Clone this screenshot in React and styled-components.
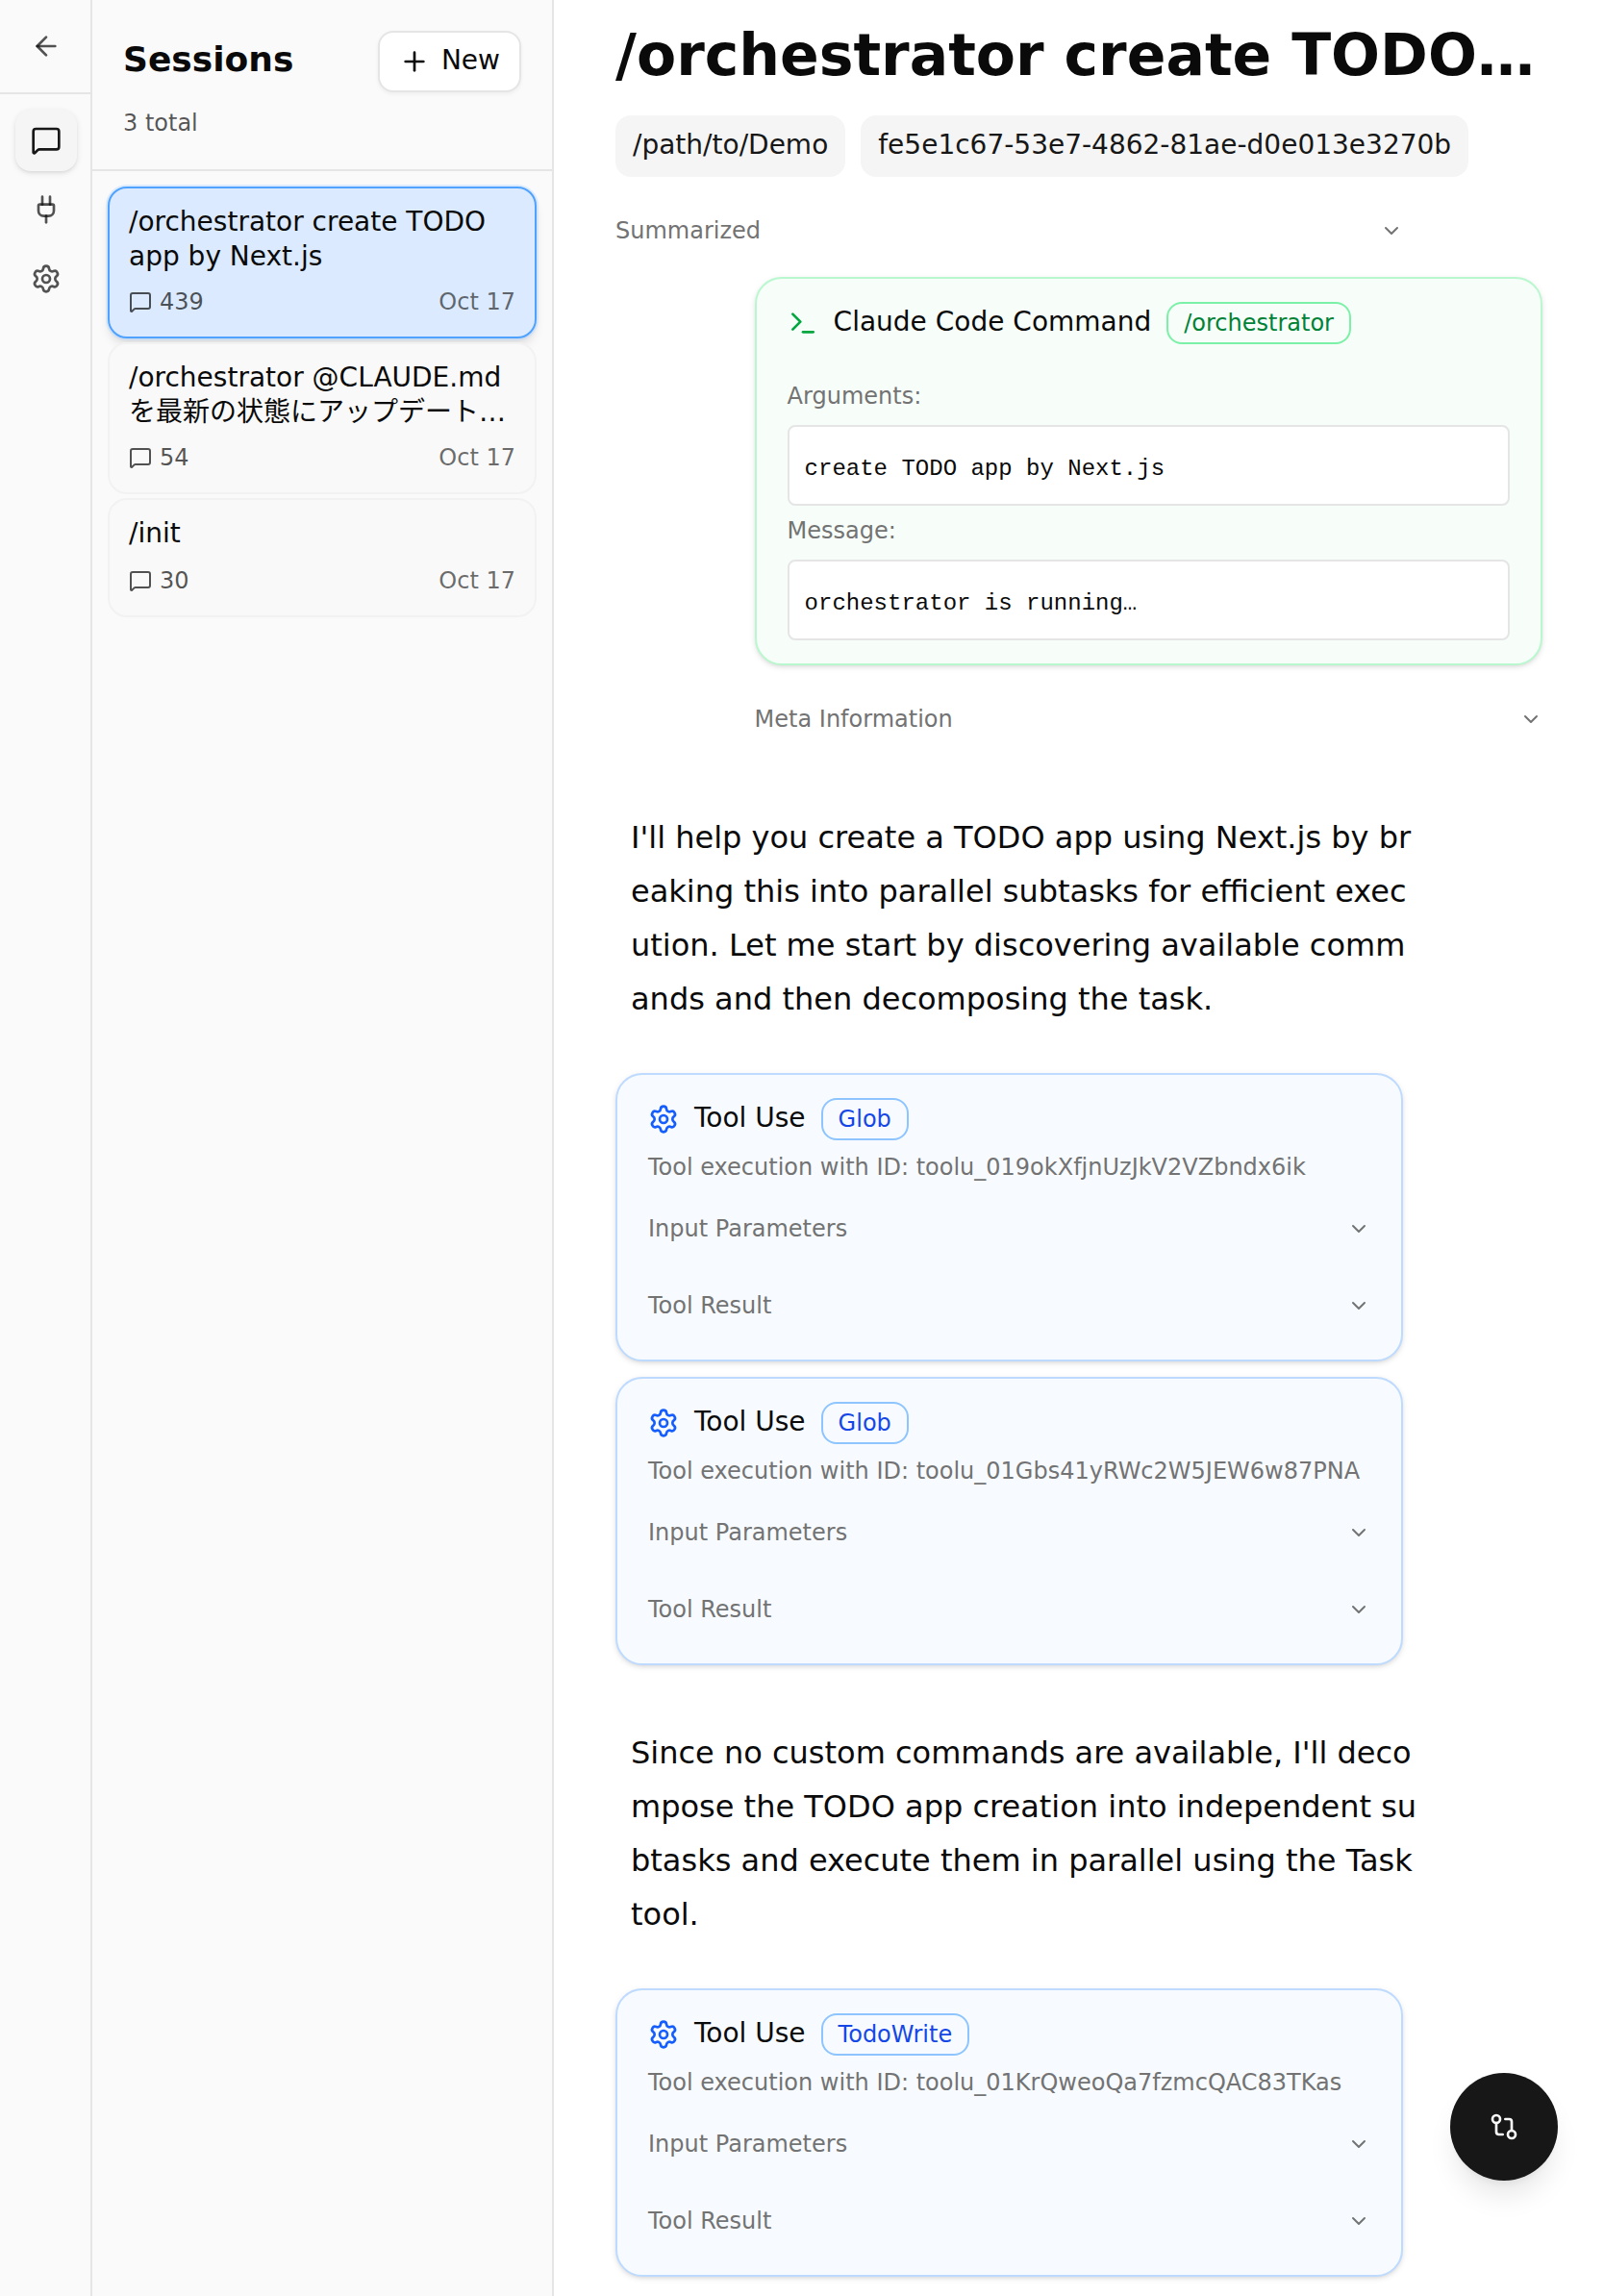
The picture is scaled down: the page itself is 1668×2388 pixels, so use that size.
import React from "react";
import styled, { createGlobalStyle, css } from "styled-components";
import { ArrowLeft, ChevronDown, GitCompare, MessageSquare, Plug, Plus, Settings, Terminal } from "lucide-react";

const GlobalStyle = createGlobalStyle`
  *, *::before, *::after { box-sizing: border-box; }
  body {
    margin: 0;
    background: #fff;
    color: #0a0a0a;
    font-family: "DejaVu Sans", "Noto Sans CJK JP", sans-serif;
    font-size: 28px;
    line-height: 40px;
    overflow: hidden;
  }
  svg { display: block; flex-shrink: 0; }
  button { font: inherit; color: inherit; cursor: pointer; }
`;

const Layout = styled.div`
  display: flex;
  width: 1668px;
  height: 2388px;
  overflow: hidden;
`;

const Rail = styled.nav`
  flex: 0 0 96px;
  background: #fafafa;
  border-right: 2px solid #e5e5e5;
`;

const RailTop = styled.div`
  height: 98px;
  padding: 16px 0 16px 16px;
  border-bottom: 2px solid #e5e5e5;
`;

const RailMenu = styled.div`
  display: flex;
  flex-direction: column;
  gap: 8px;
  padding: 16px 0 16px 16px;
`;

const RailButton = styled.button`
  display: flex;
  align-items: center;
  justify-content: center;
  width: 64px;
  height: 64px;
  padding: 0;
  border: 0;
  border-radius: 16px;
  background: transparent;
  color: rgba(10, 10, 10, 0.7);
  ${(p) =>
    p.$active &&
    css`
      background: #f5f5f5;
      color: #171717;
      box-shadow: 0 2px 6px rgba(0, 0, 0, 0.1), 0 2px 4px -2px rgba(0, 0, 0, 0.1);
    `}
`;

const Panel = styled.aside`
  flex: 0 0 480px;
  background: #fafafa;
  border-right: 2px solid #e5e5e5;
`;

const PanelHeader = styled.header`
  height: 178px;
  padding: 32px;
  border-bottom: 2px solid #e5e5e5;
`;

const PanelTitleRow = styled.div`
  display: flex;
  align-items: center;
  justify-content: space-between;
  margin-bottom: 16px;
  height: 64px;
`;

const PanelTitle = styled.h2`
  margin: 0;
  padding-bottom: 4px;
  font-size: 36px;
  line-height: 56px;
  font-weight: 700;
`;

const NewButton = styled.button`
  display: flex;
  align-items: center;
  gap: 12px;
  height: 64px;
  padding: 0 20px;
  border: 2px solid #e5e5e5;
  border-radius: 16px;
  background: #fff;
  box-shadow: 0 2px 4px rgba(0, 0, 0, 0.05);
`;

const Label = styled.span`
  padding-bottom: 2px;
`;

const Total = styled.p`
  margin: 0;
  font-size: 24px;
  line-height: 32px;
  color: rgba(10, 10, 10, 0.7);
`;

const SessionList = styled.div`
  display: flex;
  flex-direction: column;
  gap: 4px;
  padding: 16px;
`;

const SessionCard = styled.a`
  display: flex;
  flex-direction: column;
  gap: 12px;
  padding: 20px;
  border: 2px solid ${(p) => (p.$active ? "#50a2ff" : "#f2f2f2")};
  border-radius: 20px;
  background: ${(p) => (p.$active ? "#dbeafe" : "#f9f9f9")};
  box-shadow: ${(p) =>
    p.$active
      ? "0 0 0 2px rgba(190, 219, 255, 0.5), 0 8px 12px -2px rgba(0, 0, 0, 0.1), 0 4px 8px -4px rgba(0, 0, 0, 0.1)"
      : "none"};
`;

const SessionTitle = styled.div`
  height: ${(p) => (p.$wrapped ? 70 : 36)}px;
  margin: -3px 0 3px;
  line-height: 36px;
  white-space: pre-line;
`;

const SessionMeta = styled.div`
  display: flex;
  align-items: center;
  justify-content: space-between;
  font-size: 24px;
  line-height: 32px;
  color: rgba(10, 10, 10, 0.7);
`;

const MessageCount = styled.span`
  display: flex;
  align-items: center;
  gap: 8px;
`;

const SessionDate = styled.span`
  color: rgba(10, 10, 10, 0.6);
`;

const Main = styled.main`
  flex: 1;
  min-width: 0;
  padding: 20px 64px 0;
`;

const Title = styled.h1`
  margin: 0;
  height: 84px;
  font-size: 60px;
  line-height: 75px;
  font-weight: 700;
  white-space: nowrap;
`;

const Badges = styled.div`
  display: flex;
  gap: 16px;
  margin-top: 16px;
`;

const Badge = styled.span`
  display: flex;
  align-items: center;
  height: 64px;
  padding: 0 18px 2px;
  border-radius: 16px;
  background: #f5f5f5;
  color: #171717;
`;

const Conversation = styled.div`
  display: flex;
  flex-direction: column;
  margin-top: 24px;
`;

const Turn = styled.section`
  display: flex;
  flex-direction: column;
  width: 85%;
  align-self: ${(p) => (p.$user ? "flex-end" : "flex-start")};
  margin-top: ${(p) => p.$gap || 0}px;
`;

const Disclosure = styled.button`
  display: flex;
  align-items: center;
  justify-content: space-between;
  width: 100%;
  margin: ${(p) => p.$gap || 0}px 0 0;
  padding: 16px 0;
  border: 0;
  background: none;
  font-size: 24px;
  line-height: 32px;
  color: #737373;
`;

const tones = {
  green: { border: "#b9f8cf", bg: "#f7fef9", icon: "#00a63e", tagBorder: "#7bf1a8", tag: "#008236" },
  blue: { border: "#bedbff", bg: "#f7fbff", icon: "#155dfc", tagBorder: "#8ec5ff", tag: "#1447e6" },
};

const Card = styled.article`
  padding: 24px 32px;
  border: 2px solid ${(p) => tones[p.$tone].border};
  border-radius: 28px;
  background: ${(p) => tones[p.$tone].bg};
  box-shadow: 0 2px 6px rgba(0, 0, 0, 0.1), 0 2px 4px -2px rgba(0, 0, 0, 0.1);
`;

const CardHeader = styled.div`
  display: flex;
  align-items: center;
  gap: 16px;
  height: 44px;
  svg { color: ${(p) => tones[p.$tone].icon}; }
`;

const Tag = styled.span`
  padding: 4px 16px;
  border: 2px solid ${(p) => tones[p.$tone].tagBorder};
  border-radius: 16px;
  font-size: 24px;
  line-height: 32px;
  color: ${(p) => tones[p.$tone].tag};
`;

const ToolId = styled.p`
  margin: 12px 0 0;
  font-size: 24px;
  line-height: 32px;
  color: #737373;
  white-space: nowrap;
`;

const Field = styled.div`
  margin-top: ${(p) => p.$gap}px;
`;

const FieldLabel = styled.div`
  font-size: 24px;
  line-height: 32px;
  margin-bottom: 14px;
  color: #737373;
`;

const FieldValue = styled.div`
  height: 84px;
  padding: 24px 16px 0;
  border: 2px solid #e5e5e5;
  border-radius: 8px;
  background: #fff;
  font-family: "Liberation Mono", monospace;
  font-size: 24px;
  line-height: 40px;
`;

const Prose = styled.p`
  margin: 63px 0 49px;
  padding-left: 16px;
  font-size: 32px;
  line-height: 56px;
  white-space: pre;
`;

const ToolStack = styled.div`
  display: flex;
  flex-direction: column;
  gap: 16px;
`;

const Fab = styled.button`
  position: fixed;
  right: 48px;
  bottom: 120px;
  display: flex;
  align-items: center;
  justify-content: center;
  width: 112px;
  height: 112px;
  padding: 0;
  border: 0;
  border-radius: 50%;
  background: #171717;
  color: #fafafa;
  box-shadow: 0 20px 30px -6px rgba(0, 0, 0, 0.1), 0 8px 12px -8px rgba(0, 0, 0, 0.1);
`;

const sessions = [
  { title: "/orchestrator create TODO\napp by Next.js", count: 439, date: "Oct 17", active: true },
  { title: "/orchestrator @CLAUDE.md\nを最新の状態にアップデート…", count: 54, date: "Oct 17" },
  { title: "/init", count: 30, date: "Oct 17" },
];

const intro = `I'll help you create a TODO app using Next.js by br
eaking this into parallel subtasks for efficient exec
ution. Let me start by discovering available comm
ands and then decomposing the task.`;

const followUp = `Since no custom commands are available, I'll deco
mpose the TODO app creation into independent su
btasks and execute them in parallel using the Task
tool.`;

function Collapsed({ label, gap }) {
  return (
    <Disclosure $gap={gap}>
      <span>{label}</span>
      <ChevronDown size={24} />
    </Disclosure>
  );
}

function ToolCard({ name, id }) {
  return (
    <Card $tone="blue">
      <CardHeader $tone="blue">
        <Settings size={32} />
        <Label>Tool Use</Label>
        <Tag $tone="blue">{name}</Tag>
      </CardHeader>
      <ToolId>Tool execution with ID: {id}</ToolId>
      <Collapsed label="Input Parameters" gap={16} />
      <Collapsed label="Tool Result" gap={16} />
    </Card>
  );
}

export default function App() {
  return (
    <>
      <GlobalStyle />
      <Layout>
        <Rail>
          <RailTop>
            <RailButton><ArrowLeft size={32} /></RailButton>
          </RailTop>
          <RailMenu>
            <RailButton $active><MessageSquare size={32} /></RailButton>
            <RailButton><Plug size={32} /></RailButton>
            <RailButton><Settings size={32} /></RailButton>
          </RailMenu>
        </Rail>
        <Panel>
          <PanelHeader>
            <PanelTitleRow>
              <PanelTitle>Sessions</PanelTitle>
              <NewButton><Plus size={32} /><Label>New</Label></NewButton>
            </PanelTitleRow>
            <Total>3 total</Total>
          </PanelHeader>
          <SessionList>
            {sessions.map((s) => (
              <SessionCard key={s.title} $active={s.active}>
                <SessionTitle $wrapped={s.title.includes("\n")}>{s.title}</SessionTitle>
                <SessionMeta>
                  <MessageCount><MessageSquare size={24} />{s.count}</MessageCount>
                  <SessionDate>{s.date}</SessionDate>
                </SessionMeta>
              </SessionCard>
            ))}
          </SessionList>
        </Panel>
        <Main>
          <Title>/orchestrator create TODO…</Title>
          <Badges>
            <Badge>/path/to/Demo</Badge>
            <Badge>fe5e1c67-53e7-4862-81ae-d0e013e3270b</Badge>
          </Badges>
          <Conversation>
            <Turn><Collapsed label="Summarized" /></Turn>
            <Turn $user $gap={16}>
              <Card $tone="green">
                <CardHeader $tone="green">
                  <Terminal size={32} />
                  <Label>Claude Code Command</Label>
                  <Tag $tone="green">/orchestrator</Tag>
                </CardHeader>
                <Field $gap={38}>
                  <FieldLabel>Arguments:</FieldLabel>
                  <FieldValue>create TODO app by Next.js</FieldValue>
                </Field>
                <Field $gap={10}>
                  <FieldLabel>Message:</FieldLabel>
                  <FieldValue>orchestrator is running…</FieldValue>
                </Field>
              </Card>
              <Collapsed label="Meta Information" gap={24} />
            </Turn>
            <Turn>
              <Prose>{intro}</Prose>
              <ToolStack>
                <ToolCard name="Glob" id="toolu_019okXfjnUzJkV2VZbndx6ik" />
                <ToolCard name="Glob" id="toolu_01Gbs41yRWc2W5JEW6w87PNA" />
              </ToolStack>
            </Turn>
            <Turn>
              <Prose>{followUp}</Prose>
              <ToolCard name="TodoWrite" id="toolu_01KrQweoQa7fzmcQAC83TKas" />
            </Turn>
          </Conversation>
        </Main>
      </Layout>
      <Fab><GitCompare size={32} /></Fab>
    </>
  );
}
